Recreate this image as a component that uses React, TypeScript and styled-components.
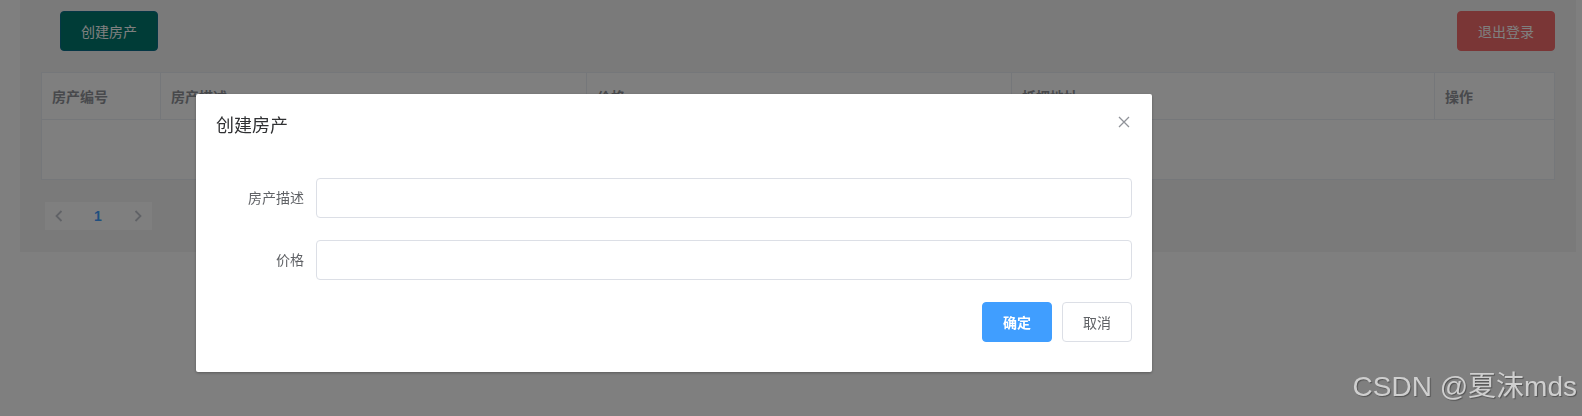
import React from "react";
import styled, { createGlobalStyle } from "styled-components";

const GlobalStyle = createGlobalStyle`
  html, body {
    margin: 0;
    background: #ffffff;
    font-family: "Liberation Sans", "Noto Sans CJK SC", sans-serif;
  }
  * {
    box-sizing: border-box;
  }
`;

const COLUMNS = ["房产编号", "房产描述", "价格", "抵押地址", "操作"];

const Page = styled.div`
  margin-left: 20px;
  width: 1556px;
  padding: 11px 21px 22px;
  background: #f4f4f4;
`;

const Toolbar = styled.div`
  display: flex;
  justify-content: space-between;
  padding-left: 19px;
`;

const Button = styled.button<{ $variant: "teal" | "danger" | "primary" | "plain" }>`
  height: 40px;
  padding: 0 20px;
  border-radius: 4px;
  font: inherit;
  font-size: 14px;
  cursor: pointer;
  border: 1px solid
    ${p =>
      p.$variant === "teal"
        ? "#0a6f8a"
        : p.$variant === "danger"
        ? "#f56c6c"
        : p.$variant === "primary"
        ? "#409eff"
        : "#dcdfe6"};
  background: ${p =>
    p.$variant === "teal"
      ? "#00796e"
      : p.$variant === "danger"
      ? "#f56c6c"
      : p.$variant === "primary"
      ? "#409eff"
      : "#ffffff"};
  color: ${p => (p.$variant === "plain" ? "#606266" : "#ffffff")};
  font-weight: ${p => (p.$variant === "primary" ? 600 : 400)};
`;

const Table = styled.div`
  margin-top: 21px;
  display: grid;
  grid-template-columns: 119px 426px 425px 423px 1fr;
  border: 1px solid #ebeef5;
  background: #ffffff;
`;

const HeadCell = styled.div<{ $last?: boolean }>`
  height: 47px;
  padding: 0 10px;
  display: flex;
  align-items: center;
  font-size: 14px;
  font-weight: bold;
  color: #909399;
  border-bottom: 1px solid #ebeef5;
  border-right: ${p => (p.$last ? "none" : "1px solid #ebeef5")};
`;

const EmptyRow = styled.div`
  grid-column: 1 / -1;
  height: 59px;
  display: flex;
  align-items: center;
  justify-content: center;
  font-size: 14px;
  color: #909399;
`;

const Pagination = styled.div`
  margin: 22px 0 0 4px;
  width: 107px;
  height: 28px;
  display: flex;
  background: #ffffff;
`;

const PageArrow = styled.span<{ $w: number }>`
  width: ${p => p.$w}px;
  display: flex;
  align-items: center;
  justify-content: center;
`;

const PageNumber = styled.span`
  flex: 1;
  display: flex;
  align-items: center;
  justify-content: center;
  font-size: 14px;
  font-weight: bold;
  color: #409eff;
`;

const Overlay = styled.div`
  position: fixed;
  inset: 0;
  background: rgba(0, 0, 0, 0.5);
`;

const DialogWrapper = styled.div`
  position: fixed;
  inset: 0;
`;

const Dialog = styled.div`
  position: relative;
  margin: 94px 0 0 196px;
  width: 956px;
  background: #ffffff;
  border-radius: 2px;
  box-shadow: 0 1px 3px rgba(0, 0, 0, 0.3);
`;

const DialogHeader = styled.div`
  padding: 20px 20px 10px;
`;

const DialogTitle = styled.span`
  font-size: 18px;
  line-height: 24px;
  color: #303133;
`;

const CloseButton = styled.button`
  position: absolute;
  top: 20px;
  right: 20px;
  width: 16px;
  height: 16px;
  padding: 0;
  border: none;
  background: transparent;
  display: flex;
  align-items: center;
  justify-content: center;
  cursor: pointer;
`;

const DialogBody = styled.div`
  padding: 30px 20px;
`;

const FormRow = styled.div`
  display: flex;
  margin-bottom: 22px;
`;

const Actions = styled.div`
  display: flex;
  justify-content: flex-end;
  gap: 10px;
`;

const Label = styled.label`
  width: 100px;
  flex: none;
  padding-right: 12px;
  text-align: right;
  line-height: 40px;
  font-size: 14px;
  color: #606266;
`;

const Input = styled.input`
  flex: 1;
  height: 40px;
  padding: 0 15px;
  border: 1px solid #dcdfe6;
  border-radius: 4px;
  font: inherit;
  font-size: 14px;
  color: #606266;
  outline: none;
`;

const Watermark = styled.div`
  position: fixed;
  right: 5px;
  top: 373px;
  font-size: 28px;
  line-height: 28px;
  color: #cfcfcf;
  text-shadow: 1px 1px 1px rgba(0, 0, 0, 0.35);
  white-space: nowrap;
`;

const Chevron = ({ dir }: { dir: "left" | "right" }) => (
  <svg width="8" height="12" viewBox="0 0 8 12">
    <path
      d={dir === "left" ? "M6.5 1 L1.5 6 L6.5 11" : "M1.5 1 L6.5 6 L1.5 11"}
      fill="none"
      stroke="#c0c4cc"
      strokeWidth="1.8"
    />
  </svg>
);

export default function App() {
  return (
    <>
      <GlobalStyle />
      <Page>
        <Toolbar>
          <Button $variant="teal">创建房产</Button>
          <Button $variant="danger">退出登录</Button>
        </Toolbar>
        <Table>
          {COLUMNS.map((c, i) => (
            <HeadCell key={c} $last={i === COLUMNS.length - 1}>
              {c}
            </HeadCell>
          ))}
          <EmptyRow>暂无数据</EmptyRow>
        </Table>
        <Pagination>
          <PageArrow $w={28}>
            <Chevron dir="left" />
          </PageArrow>
          <PageNumber>1</PageNumber>
          <PageArrow $w={29}>
            <Chevron dir="right" />
          </PageArrow>
        </Pagination>
      </Page>
      <Overlay />
      <DialogWrapper>
        <Dialog>
          <DialogHeader>
            <DialogTitle>创建房产</DialogTitle>
            <CloseButton aria-label="close">
              <svg width="12" height="12" viewBox="0 0 12 12">
                <path
                  d="M1 1 L11 11 M11 1 L1 11"
                  stroke="#909399"
                  strokeWidth="1.3"
                />
              </svg>
            </CloseButton>
          </DialogHeader>
          <DialogBody>
            <FormRow>
              <Label>房产描述</Label>
              <Input />
            </FormRow>
            <FormRow>
              <Label>价格</Label>
              <Input />
            </FormRow>
            <Actions>
              <Button $variant="primary">确定</Button>
              <Button $variant="plain">取消</Button>
            </Actions>
          </DialogBody>
        </Dialog>
      </DialogWrapper>
      <Watermark>CSDN @夏沫mds</Watermark>
    </>
  );
}
